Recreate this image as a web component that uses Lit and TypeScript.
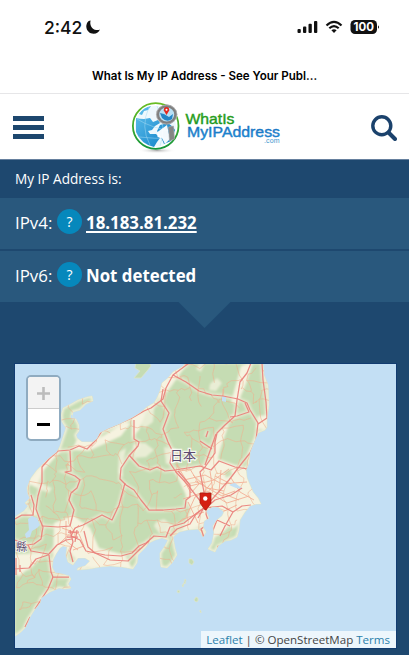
import { LitElement, html, svg, css } from "lit";
import { customElement } from "lit/decorators.js";

const LAND =
  "M187 362L182 367L173 372L168 378L162 383L160 391L157 398L154 403L147 407L140 413L132 418L120 424L108 429L100 433L97 439L93 442L82 442L77 438L76 435L79 431L79 425L76 419L72 417L73 412L80 410L86 404L93 401L92 396L87 397L78 400L71 404L63 408L61 415L62 422L66 428L63 437L60 446L57 452L47 460L37 470L31 478L27 488L28 494L30 498L25 503L28 506L24 511L13 518V637L17 635L21 632L25 628L28 622L30 617L35 609L40 603L41 598L50 592L59 588L65 589L71 588L68 584L71 579L69 576L62 574L55 573L52 567L53 560L56 554L60 548L63 546L67 547L66 555L68 562L73 565L78 558L85 558L90 561L85 566L78 568L77 570L89 569L100 567L110 566L122 567L133 569L137 563L138 555L145 548L149 543L155 540L162 538L168 540L165 546L160 553L160 560L161 567L167 568L172 563L177 555L175 548L173 537L179 532L187 530L198 529L201 533L203 537L206 532L203 527L204 521L209 518L206 511L212 507L218 507L224 512L222 516L217 520L213 526L214 533L212 543L208 549L215 552L218 546L225 541L231 540L237 537L239 530L240 520L245 512L250 506L256 504L261 504L258 498L253 492L250 485L247 478L246 470L249 463L250 452L254 442L258 433L265 430L267 427L267 419L269 405L268 385L264 375L263 362Z";
const ISLANDS =
  "M136 362L135 368L140 371L134 378L141 378L147 371L151 366L149 362Z M189 559l3 0 2 3-2 3-3-2z M185 579l1 1-1 4-1-1z M183 584l1-1-1 4-1-1z M178 590l2 1-1 2-2-1z M196 597l2 1 0 3-2 1-2-2z M200 610l1 1 0 2-1-1z";
const PLAINS =
  "M174 470L199 467L216 459L237 466L248 469L251 486L263 504L246 510L236 527L211 539L204 525L182 532L190 511L185 493Z M54 523L73 515L90 528L99 548L125 555L132 568L82 567L67 548L53 558Z M158 383L172 370L190 360L168 391L159 399Z M132 417L146 412L139 430L132 438Z M218 432L229 424L221 447L216 466L209 464Z M241 366L253 362L246 384L237 405L231 402Z M77 439L93 442L124 423L131 423L121 436L89 451L72 450Z M27 483L54 452L62 450L42 472L37 488Z M258 416L267 415L265 429L256 429Z M14 554L45 553L36 563L18 577Z";
const PATCHES =
  "M210 384l7-6 5 5-6 8-7-1z M147 398l8 3-2 21-8 6-4-3z M133 444l12-1 9 7-8 7-12 1z M119 452l7-4-4 22 1 7-5-4z M35 484l8 0 9 4-3 5-11-4z M156 522l8-3 9 7-4 7-10 0-5-7z M25 510l9-3 3 8-8 2z M200 362l5 0-4 10-5-3z M164 447l13 2-2 13-9 2z M206 479l10-7 6 5-7 7z M255 451l3 0-7 21-7 0z";
const WOODS =
  "M216 537l7-5 6-6 4 3-1 8-9 5-6 3-6 3z M224 472l7-3 1 6-6 3z M180 513l8-5-1 8-7 5z";
const WATER =
  "M28 519L32 516L37 518L40 525L37 528L32 531L30 537L26 538L25 534L29 530Z M222 396L226 397L226 402L222 401Z M231 484L235 483L243 489L236 488L229 485Z M71 415L77 415L77 419L71 418Z";

const ROADS = [
  "M189 363L173 375L166 388L163 399L151 408L144 411L132 418L114 426L102 431L96 440L87 449L79 446L70 450L58 451L49 459L42 467L42 482L38 496L36 509L40 520L43 527L41 539L34 544L27 545L15 540",
  "M70 451L71 471L65 472L75 476L80 480L77 488L71 493L69 500L74 510L70 526L58 527L43 526",
  "M173 375L186 382L199 391L212 395L223 396L238 399L247 403L250 410L258 423L256 440L250 453L242 463L229 480L215 496L205 507",
  "M251 363L247 373L240 382L237 400L235 416L225 425L217 433L215 442L215 453L205 467L200 472L204 492L205 507",
  "M262 363L263 380L266 402L267 418L258 424",
  "M163 389L161 401L169 413L163 429L168 442L172 450L170 463L176 472L187 484L201 502L206 508",
  "M134 420L134 439L139 442L138 446L129 456L121 468L120 479L126 485L134 490L141 500L149 510L163 510L176 509L185 508L186 500L190 497L190 485L178 471",
  "M125 483L119 505L112 520L102 515L83 525L75 528L71 536L80 540L86 551L105 555L121 556L132 553L139 546L146 543L154 536L166 537L170 527L184 523L193 516L205 507",
  "M84 531L88 547L95 553L110 560L128 561L137 552L149 541",
  "M129 455L139 466L150 470L157 467L165 471L175 470L200 466L211 470L219 461L235 467L248 469",
  "M70 530L73 542L70 551L73 562 M77 530L75 542 M68 532H79 M67 537H78",
  "M15 519L22 515L33 515L34 505L31 495",
  "M15 569L29 568L36 559L48 555L57 545L66 540L72 539 M48 554L31 551L28 545 M49 555L51 572L53 577L48 589L35 609 M30 617L25 627 M52 577H69 M16 558V575 M20 565V572",
  "M207 507L206 514L209 523L201 529L204 537 M208 511L217 520L230 526 M217 520L210 538 M206 508L222 506L233 512L242 506L251 505 M233 512L225 526L220 536",
  "M204 508L196 514L190 524L177 529L170 536 M205 506L198 518 M206 508L215 500L231 495L242 488 M216 434L205 465",
  "M200 441L212 449 M245 403L249 412L237 416L230 417 M206 437L208 431"
];

const LOCAL = [
  "M175 472L190 469L199 484L191 493L184 480L205 475L222 484L247 482M183 499L207 491L227 503L249 496",
  "M210 471L213 491L205 507M221 470L219 492L239 500M188 502L198 523M195 481L222 496L235 491",
  "M176 464L190 486L214 480L229 469M193 475L207 488L224 491M200 502L220 513L237 505",
  "M231 478L240 492L254 500M212 482L204 492L195 497L186 517M204 512L186 518L178 523",
  "M62 528L79 534L84 546L73 550M66 521L66 541L78 550M60 543L79 525M215 476L233 485M223 396L223 389"
];

/* Repeatable pseudo-random lattice used for the thin country lanes. */
function lanes(): string {
  let seed = 71;
  const rnd = () => (seed = (seed * 16807) % 2147483647) / 2147483647;
  const step = 13;
  const pts: number[][][] = [];
  for (let r = 0; r < 23; r++) {
    pts.push([]);
    for (let c = 0; c < 21; c++)
      pts[r].push([12 + c * step + rnd() * 11, 360 + r * step + rnd() * 11]);
  }
  let d = "";
  const link = (a: number[], b: number[]) => {
    d += `M${a[0].toFixed(1)} ${a[1].toFixed(1)}`;
    for (const t of [0.3, 0.65, 1]) {
      const j = t === 1 ? 0 : 4;
      const x = a[0] + (b[0] - a[0]) * t + (rnd() - 0.5) * j;
      const y = a[1] + (b[1] - a[1]) * t + (rnd() - 0.5) * j;
      d += `L${x.toFixed(1)} ${y.toFixed(1)}`;
    }
  };
  for (let r = 0; r < 22; r++)
    for (let c = 0; c < 20; c++) {
      if (rnd() < 0.62) link(pts[r][c], pts[r][c + 1]);
      if (rnd() < 0.62) link(pts[r][c], pts[r + 1][c]);
    }
  return d;
}

@customElement("area-map")
class AreaMap extends LitElement {
  static styles = css`
    :host { display: block; position: relative; height: 284px; background: #c3dff4; overflow: hidden; }
    .tiles { display: block; width: 381px; height: 284px; }
    .zoom { position: absolute; left: 11px; top: 11px; width: 31px; height: 62px; border: 2px solid #8fabc0; border-radius: 5px; overflow: hidden; display: flex; flex-direction: column; background: #fff; }
    .btn { flex: 1; display: grid; place-items: center; padding-top: 2px; }
    .btn.off { background: #f3f3f3; border-bottom: 1px solid #ccc; }
    .credit { position: absolute; right: 0; bottom: 0; height: 17px; padding: 0 6px 0 5px; background: rgba(255,255,255,.7); font: 11.55px/17px "Open Sans", sans-serif; color: #444; white-space: nowrap; }
    .link { color: #2b80ab; }
  `;
  render() {
    return html`
      <svg class="tiles" viewBox="15 364 381 284">
        <defs>
          <clipPath id="land"><path d=${LAND} /></clipPath>
          <filter id="soft" x="-5%" y="-5%" width="110%" height="110%"><feGaussianBlur stdDeviation="1.3" /></filter>
        </defs>
        <path d="${LAND}${ISLANDS}" fill="#c5dcb3" stroke="#dde5cb" stroke-width=".8" />
        <g clip-path="url(#land)">
          <g filter="url(#soft)" fill="#f6f3e0">
            <path d=${LAND} fill="none" stroke="#eeeed8" stroke-width="3.5" />
            ${ROADS.map((d) => svg`<path d=${d} fill="none" stroke="#f5eedb" stroke-width="4.5" opacity=".6" />`)}
            <path d=${PLAINS} />
            <path d=${PATCHES} opacity=".75" />
            <path d=${WOODS} fill="#cbdfb8" />
          </g>
          <path d=${lanes()} fill="none" stroke="#eeb08e" stroke-width=".8" opacity=".7" />
          ${LOCAL.map((d) => svg`<path d=${d} fill="none" stroke="#f3b096" stroke-width=".9" />`)}
          <path d=${WATER} fill="#c3dff4" />
          ${ROADS.map((d) => svg`<path d=${d} fill="none" stroke="#e9807b" stroke-width="1.25" stroke-linejoin="round" opacity=".92" />`)}
        </g>
        <g font-family="Noto Sans CJK JP, sans-serif" fill="#5c4b70" stroke="#fff" stroke-opacity=".8" paint-order="stroke">
          <text x="170" y="460" font-size="13" stroke-width="2.5">日本</text>
          <text x="16" y="551" font-size="11" stroke-width="1.5">縣</text>
        </g>
        <path d="M200 493H211V503L206 510H205L200 503Z" fill="#d51f12" stroke="#a51710" stroke-width=".7" />
        <circle cx="205.3" cy="498.5" r="2.2" fill="#fff" />
      </svg>
      <div class="zoom">
        <div class="btn off"><svg width="13" height="13"><path d="M0 6.5H13M6.5 0V13" stroke="#bcbcbc" stroke-width="2.6" /></svg></div>
        <div class="btn"><svg width="13" height="13"><path d="M0 6.5H13" stroke="#000" stroke-width="3" /></svg></div>
      </div>
      <div class="credit"><span class="link">Leaflet</span> | © OpenStreetMap <span class="link">Terms</span></div>
    `;
  }
}

@customElement("app-root")
class AppRoot extends LitElement {
  static styles = css`
    :host { display: flex; flex-direction: column; width: 409px; height: 655px; overflow: hidden; background: #1e486f; font-family: "Open Sans", sans-serif; color: #fff; }
    .status { height: 54px; background: #fff; color: #111; display: flex; justify-content: space-between; box-sizing: border-box; padding: 0 29px 0 44px; align-items: center; }
    .clock { display: flex; align-items: center; gap: 4px; font: 500 17.5px Inter, sans-serif; }
    .title { height: 39px; background: #fff; color: #000; border-bottom: 1px solid #e6e6e8; font: 600 11.55px/45px Inter, sans-serif; text-align: center; white-space: nowrap; }
    .header { height: 66px; flex: none; background: #fff; border-bottom: 1px solid #66809e; box-sizing: border-box; display: flex; justify-content: space-between; align-items: center; padding: 0 12px 0 13px; }
    .menu { width: 31px; height: 23px; display: flex; flex-direction: column; justify-content: space-between; margin-top: 2px; }
    .bar { height: 5px; background: #1d476e; }
    .logo { width: 155px; height: 60px; margin-left: -4px; }
    .search { margin-top: 3px; }
    .label { height: 38px; line-height: 37px; padding-left: 15px; font-size: 13.6px; }
    .row { height: 51px; box-sizing: border-box; padding: 0 0 2px 15px; margin-bottom: 1.5px; background: #29587d; display: flex; align-items: center; font-size: 16.85px; }
    .name { width: 42px; }
    .help { width: 25px; height: 25px; border-radius: 50%; background: #0688bc; font-size: 14px; line-height: 25px; text-align: center; margin-right: 4px; position: relative; top: -1px; }
    .value { font-weight: 700; }
    .value.under { text-decoration: underline; text-decoration-thickness: 1.5px; text-underline-offset: 2px; }
    .arrow { width: 54px; height: 27px; margin: -2px auto 0; background: #29587d; clip-path: polygon(0 0, 100% 0, 50% 100%); }
    .map { margin: 36px 13px 0 15px; box-shadow: 0 0 0 1px #123c70; }
  `;
  render() {
    return html`
      <div class="status">
        <div class="clock"><span>2:42</span>
          <svg width="15" height="14" viewBox="0 0 15 14"><path d="M4.600.4C1.800.4.2 3.800.3 6.800C.6 11.200 3.800 13.700 7.600 13.700C10.800 13.700 13 12 13.900 9.500C12.900 10 11.600 10.200 10.300 10C5.900 9.400 3.300 4.800 4.600.4Z" fill="#111" /></svg>
        </div>
        <svg width="84" height="16" viewBox="296 19 84 16">
          <g fill="#111">
            <rect x="297.500" y="29" width="3.300" height="4" rx="1" /><rect x="303" y="26.500" width="3.300" height="6.500" rx="1" /><rect x="308.500" y="23.700" width="3.300" height="9.300" rx="1" /><rect x="314" y="21" width="3.300" height="12" rx="1" />
            <rect x="350.500" y="20" width="26.500" height="14" rx="4.500" /><path d="M378 25.200q2 1.800 0 3.600z" />
            <path d="M334 33L331.400 30.300Q334 28.200 336.600 30.300Z" />
          </g>
          <path d="M326.500 25.500Q334 18.300 341.500 25.500M329.300 28.300Q334 23.900 338.700 28.300" fill="none" stroke="#111" stroke-width="2.200" />
          <text x="363.700" y="31.200" text-anchor="middle" font-family="Inter" font-weight="700" font-size="11.500" fill="#fff">100</text>
        </svg>
      </div>
      <div class="title">What Is My IP Address - See Your Publ...</div>
      <div class="header">
        <div class="menu"><div class="bar"></div><div class="bar"></div><div class="bar"></div></div>
        <svg class="logo" viewBox="128 96 155 60">
          <defs>
            <linearGradient id="sea" x2="1" y2="1"><stop stop-color="#62c2ee" /><stop offset="1" stop-color="#087bc4" /></linearGradient>
            <linearGradient id="ring" x2="0" y2="1"><stop stop-color="#69bd22" /><stop offset="1" stop-color="#13963a" /></linearGradient>
            <linearGradient id="green" x2="0" y2="1"><stop stop-color="#3ca81b" /><stop offset="1" stop-color="#078c25" /></linearGradient>
            <linearGradient id="blue" x2="0" y2="1"><stop stop-color="#1262b3" /><stop offset="1" stop-color="#249be0" /></linearGradient>
            <radialGradient id="shade"><stop stop-color="#888" stop-opacity=".7" /><stop offset="1" stop-color="#fff" stop-opacity="0" /></radialGradient>
          </defs>
          <ellipse cx="157" cy="149.500" rx="19" ry="3" fill="url(#shade)" />
          <circle cx="155.700" cy="125" r="22.800" fill="#fff" stroke="url(#ring)" stroke-width="1.800" />
          <circle cx="155.500" cy="125.300" r="20.500" fill="#eef8fd" />
          <path d="M136 117Q140 118 144 118L150 117L153 121L158 119L160 122L155 125L152 129L148 130L150 133L156 133L160 137L157 141L154 146Q141 143 136 131Z M139 113Q144 106 151 105L148 109L144 110L142 114Z M160 124L168 122L173 126L175 129L171 140L164 143L161 136L157 130Z" fill="url(#sea)" />
          <path d="M137 118Q151 127 175 131M139 136Q154 138 172 137M149 106Q140 126 150 144M157 105Q167 126 160 145" stroke="#a7daf2" stroke-width=".5" fill="none" />
          <path d="M157.500 131L167 124L170 138L165 143L162 137L157.500 136Z" fill="#fff" opacity=".95" />
          <path d="M168.500 126L173.500 125L174.500 138L169.500 140Z" fill="#858585" stroke="#aaa" stroke-width=".6" />
          <ellipse cx="166.700" cy="113.500" rx="9" ry="8.500" fill="#b9e0f5" stroke="#808080" stroke-width="3" />
          <ellipse cx="166.700" cy="113.500" rx="10.300" ry="9.600" fill="none" stroke="#bcbcbc" stroke-width=".7" />
          <path d="M160 112L164 113L169 116L173 113L172 118Q167 122 162 117Z" fill="#2385c7" />
          <path d="M166.500 114L163.800 109.500Q163.500 106 166.500 106Q169.500 106 169.200 109.500Z" fill="#e3271d" /><circle cx="166.500" cy="108.800" r="1" fill="#fff" />
          <g font-family="Liberation Sans, sans-serif" stroke-width=".4">
            <text x="185.500" y="122.800" font-size="14.500" fill="url(#green)" stroke="#279d20" textLength="49" lengthAdjust="spacingAndGlyphs">WhatIs</text>
            <text x="187" y="135.700" font-size="14.500" fill="url(#blue)" stroke="#1778c7" textLength="93" lengthAdjust="spacingAndGlyphs">MyIPAddress</text>
            <text x="264" y="141.800" font-size="7" fill="#3d96ce" textLength="15.500">.com</text>
          </g>
        </svg>
        <svg class="search" width="26" height="26" viewBox="0 0 26 26"><circle cx="10.800" cy="10.800" r="9" fill="none" stroke="#1b426c" stroke-width="3.400" /><path d="M17.500 17.500L24 24" stroke="#1b426c" stroke-width="4" stroke-linecap="round" /></svg>
      </div>
      <div class="label">My IP Address is:</div>
      <div class="row"><span class="name">IPv4:</span><span class="help">?</span><span class="value under">18.183.81.232</span></div>
      <div class="row"><span class="name">IPv6:</span><span class="help">?</span><span class="value">Not detected</span></div>
      <div class="arrow"></div>
      <area-map class="map"></area-map>
    `;
  }
}
